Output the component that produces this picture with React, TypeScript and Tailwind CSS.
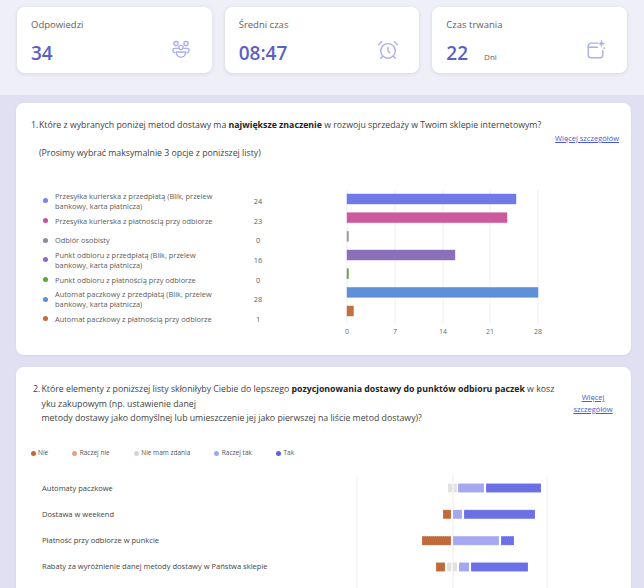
import { AlarmClock } from "lucide-react";
import type { ReactNode } from "react";

const deliveryRows = [
  { lines: ["Przesyłka kurierska z przedpłatą (Blik, przelew", "bankowy, karta płatnicza)"], count: 24, dot: "bg-[#7b83eb]" },
  { lines: ["Przesyłka kurierska z płatnością przy odbiorze"], count: 23, dot: "bg-[#c8509a]" },
  { lines: ["Odbiór osobisty"], count: 0, dot: "bg-[#8b8b99]" },
  { lines: ["Punkt odbioru z przedpłatą (Blik, przelew", "bankowy, karta płatnicza)"], count: 16, dot: "bg-[#8c6dbd]" },
  { lines: ["Punkt odbioru z płatnością przy odbiorze"], count: 0, dot: "bg-[#5aa53a]" },
  { lines: ["Automat paczkowy z przedpłatą (Blik, przelew", "bankowy, karta płatnicza)"], count: 28, dot: "bg-[#5b8fd6]" },
  { lines: ["Automat paczkowy z płatnością przy odbiorze"], count: 1, dot: "bg-[#c06b3a]" },
];

const deliveryBars = [
  { width: 169, fill: "#6f7ae8" },
  { width: 160, fill: "#cc5a9d" },
  { width: 1.5, fill: "#9a9a9a" },
  { width: 108, fill: "#8b70b9" },
  { width: 1.5, fill: "#5fa640" },
  { width: 191, fill: "#5d90d8" },
  { width: 6.5, fill: "#c2703e" },
];

const ticks = [
  { label: "0", x: 11 },
  { label: "7", x: 59 },
  { label: "14", x: 107 },
  { label: "21", x: 154 },
  { label: "28", x: 202 },
];

const likertLegend = [
  { label: "Nie", dot: "bg-[#c0693a]" },
  { label: "Raczej nie", dot: "bg-[#e4a27c]" },
  { label: "Nie mam zdania", dot: "bg-[#d6d6d6]" },
  { label: "Raczej tak", dot: "bg-[#a0a6f0]" },
  { label: "Tak", dot: "bg-[#5c62e0]" },
];

const likertColors = {
  no: "#c2693a",
  neutral: "#e2e2e2",
  rather: "#a3a8f0",
  yes: "#6b70e6",
};

// segments as [x1, x2, colour key], x in svg coords (page x - 350)
const likertRows: { label: string; segments: [number, number, keyof typeof likertColors][] }[] = [
  {
    label: "Automaty paczkowe",
    segments: [
      [98, 102.3, "neutral"],
      [103.7, 107, "neutral"],
      [108, 134, "rather"],
      [136, 191, "yes"],
    ],
  },
  {
    label: "Dostawa w weekend",
    segments: [
      [93, 101, "no"],
      [103, 112, "rather"],
      [114, 185, "yes"],
    ],
  },
  {
    label: "Płatność przy odbiorze w punkcie",
    segments: [
      [72, 101, "no"],
      [103, 149, "rather"],
      [151, 164, "yes"],
    ],
  },
  {
    label: "Rabaty za wyróżnienie danej metody dostawy w Państwa sklepie",
    segments: [
      [86, 95, "no"],
      [97, 101.3, "neutral"],
      [102.7, 107, "neutral"],
      [109, 119, "rather"],
      [121, 178, "yes"],
    ],
  },
];

function PeopleIcon() {
  return (
    <svg width="22" height="22" viewBox="0 0 24 24" fill="none" stroke="#a9aeec" strokeWidth="1.5" strokeLinecap="round" strokeLinejoin="round">
      <circle cx="6.5" cy="5" r="2.3" />
      <circle cx="17.5" cy="5" r="2.3" />
      <circle cx="12" cy="9.3" r="2.3" />
      <path d="M8.6 10.2H4.9a1.8 1.8 0 0 0-1.8 1.8v.4c0 1.2.9 2.3 2.4 2.7" />
      <path d="M15.4 10.2h3.7a1.8 1.8 0 0 1 1.8 1.8v.4c0 1.2-.9 2.3-2.4 2.7" />
      <path d="M7 14.2h10v.6a5 5 0 0 1-10 0z" />
    </svg>
  );
}

function CalendarSparkIcon() {
  return (
    <svg width="22" height="22" viewBox="0 0 24 24" fill="none" stroke="#a9aeec" strokeWidth="1.5" strokeLinecap="round" strokeLinejoin="round">
      <path d="M13.5 4.5H6.5a3 3 0 0 0-3 3v10a3 3 0 0 0 3 3h10a3 3 0 0 0 3-3V12.5" />
      <path d="M3.5 9h10" />
      <path d="M18 1.8l.8 2.4 2.4.8-2.4.8-.8 2.4-.8-2.4-2.4-.8 2.4-.8z" fill="#a9aeec" strokeWidth="0.8" />
      <circle cx="21" cy="10" r="0.9" fill="#a9aeec" stroke="none" />
    </svg>
  );
}

function StatCard({ label, value, unit, icon }: { label: string; value: string; unit?: string; icon: ReactNode }) {
  return (
    <div className="h-[66px] flex-1 rounded-[8px] bg-white px-[14px] pt-[10px] shadow-[0_1px_4px_rgba(70,70,140,0.13)]">
      <div className="text-[9.5px] leading-[15px] text-[#616161]">{label}</div>
      <div className="mt-[8px] flex items-start justify-between pr-[6px]">
        <div className="flex items-baseline">
          <span className="text-[19px] font-semibold leading-[26px] text-[#5b5fc7]">{value}</span>
          {unit && <span className="ml-[16px] text-[8px] text-[#616161]">{unit}</span>}
        </div>
        <div className="-mt-[1px]">{icon}</div>
      </div>
    </div>
  );
}

function DetailsLink({ className }: { className: string }) {
  return (
    <a href="#" className={"text-[7.5px] text-[#4a5bd4] underline " + className}>
      Więcej szczegółów
    </a>
  );
}

function DeliveryChart() {
  return (
    <svg width="220" height="155" viewBox="0 0 220 155" className="ml-[68px] shrink-0">
      {ticks.map((t) => (
        <line key={t.label} x1={t.x} x2={t.x} y1="5" y2="138" stroke="#eeeef0" strokeWidth="1" />
      ))}
      {deliveryBars.map((b, i) => (
        <rect
          key={i}
          x="11"
          y={14 + i * 18.67 - 5}
          width={b.width}
          height="10"
          fill={b.fill}
          stroke={b.fill}
          strokeOpacity="0.5"
          strokeWidth="0.8"
        />
      ))}
      {ticks.map((t) => (
        <text key={t.label} x={t.x} y="149" textAnchor="middle" fontSize="7" fill="#6b6b6b">
          {t.label}
        </text>
      ))}
    </svg>
  );
}

function LikertChart() {
  return (
    <svg width="210" height="113" viewBox="0 0 210 113" className="shrink-0">
      <line x1="7" x2="7" y1="0" y2="113" stroke="#efeff1" />
      <line x1="103" x2="103" y1="0" y2="113" stroke="#ececee" />
      <line x1="197" x2="197" y1="0" y2="113" stroke="#efeff1" />
      {likertRows.map((row, i) =>
        row.segments.map(([x1, x2, key], j) => (
          <rect
            key={i + "-" + j}
            x={x1}
            y={13 + i * 26.33 - 4.5}
            width={x2 - x1}
            height="9"
            fill={likertColors[key]}
            stroke="#ffffff"
            strokeOpacity="0.35"
            strokeWidth="0.8"
            strokeDasharray="1 1"
          />
        )),
      )}
    </svg>
  );
}

export default function App() {
  return (
    <div className="h-[588px] w-[644px] overflow-hidden bg-[#e1e0f3] font-['Open_Sans',sans-serif] text-[#424242]">
      <div className="bg-[#efeff8] px-[17px] pb-[22px] pt-[7px]">
        <div className="flex gap-[13px]">
          <StatCard label="Odpowiedzi" value="34" icon={<PeopleIcon />} />
          <StatCard
            label="Średni czas"
            value="08:47"
            icon={<AlarmClock size={22} strokeWidth={1.5} color="#a9aeec" />}
          />
          <StatCard label="Czas trwania" value="22" unit="Dni" icon={<CalendarSparkIcon />} />
        </div>
      </div>

      <div className="pl-[16px] pt-[8px]">
        <section className="h-[252px] w-[615px] rounded-[8px] bg-white shadow-[0_1px_3px_rgba(70,70,140,0.08)]">
          <div className="flex pl-[15px] pr-[12px] pt-[16px]">
            <div className="flex flex-1 text-[8.75px] leading-[12px]">
              <span className="w-[8px] shrink-0">1.</span>
              <div>
                <p className="whitespace-nowrap">
                  Które z wybranych poniżej metod dostawy ma <b className="font-bold text-[#242424]">największe znaczenie</b> w rozwoju sprzedaży w Twoim sklepie internetowym?
                </p>
                <p className="mt-[16px]">(Prosimy wybrać maksymalnie 3 opcje z poniższej listy)</p>
              </div>
            </div>
            <DetailsLink className="mt-[14px] whitespace-nowrap leading-[11px]" />
          </div>

          <div className="mt-[26px] flex">
            <div className="ml-[26.5px] mt-[6px]">
              {deliveryRows.map((row) => (
                <div key={row.lines[0]} className="flex h-[19.7px] items-center text-[7.4px] leading-[10px] text-[#5c5c5c]">
                  <span className={"h-[5px] w-[5px] shrink-0 rounded-full " + row.dot} />
                  <div className="ml-[7.5px] w-[193px]">
                    {row.lines.map((l) => (
                      <div key={l}>{l}</div>
                    ))}
                  </div>
                  <span className="w-[20px] text-center text-[#616161]">{row.count}</span>
                </div>
              ))}
            </div>
            <DeliveryChart />
          </div>
        </section>

        <section className="mt-[12px] h-[240px] w-[615px] rounded-[8px] bg-white shadow-[0_1px_3px_rgba(70,70,140,0.08)]">
          <div className="flex pl-[17px] pr-[17px] pt-[15px]">
            <div className="flex flex-1 text-[8.75px] leading-[14.5px]">
              <span className="w-[8.5px] shrink-0">2.</span>
              <p className="whitespace-nowrap">
                Które elementy z poniższej listy skłoniłyby Ciebie do lepszego{" "}
                <b className="font-bold text-[#242424]">pozycjonowania dostawy do punktów odbioru paczek</b> w kosz
                <br />
                yku zakupowym (np. ustawienie danej
                <br />
                metody dostawy jako domyślnej lub umieszczenie jej jako pierwszej na liście metod dostawy)?
              </p>
            </div>
            <DetailsLink className="mt-[9px] w-[42px] text-center leading-[12px]" />
          </div>

          <div className="mt-[22.5px] flex gap-[24px] pl-[14.5px] text-[6.5px] leading-[10px] text-[#555]">
            {likertLegend.map((item) => (
              <div key={item.label} className="flex items-center">
                <span className={"h-[5px] w-[5px] rounded-full " + item.dot} />
                <span className="ml-[2.5px]">{item.label}</span>
              </div>
            ))}
          </div>

          <div className="mt-[17px] flex">
            <div className="w-[334px] pl-[26px]">
              {likertRows.map((row) => (
                <div key={row.label} className="flex h-[26.33px] items-center text-[7.55px] text-[#444]">
                  {row.label}
                </div>
              ))}
            </div>
            <LikertChart />
          </div>
        </section>
      </div>
    </div>
  );
}
